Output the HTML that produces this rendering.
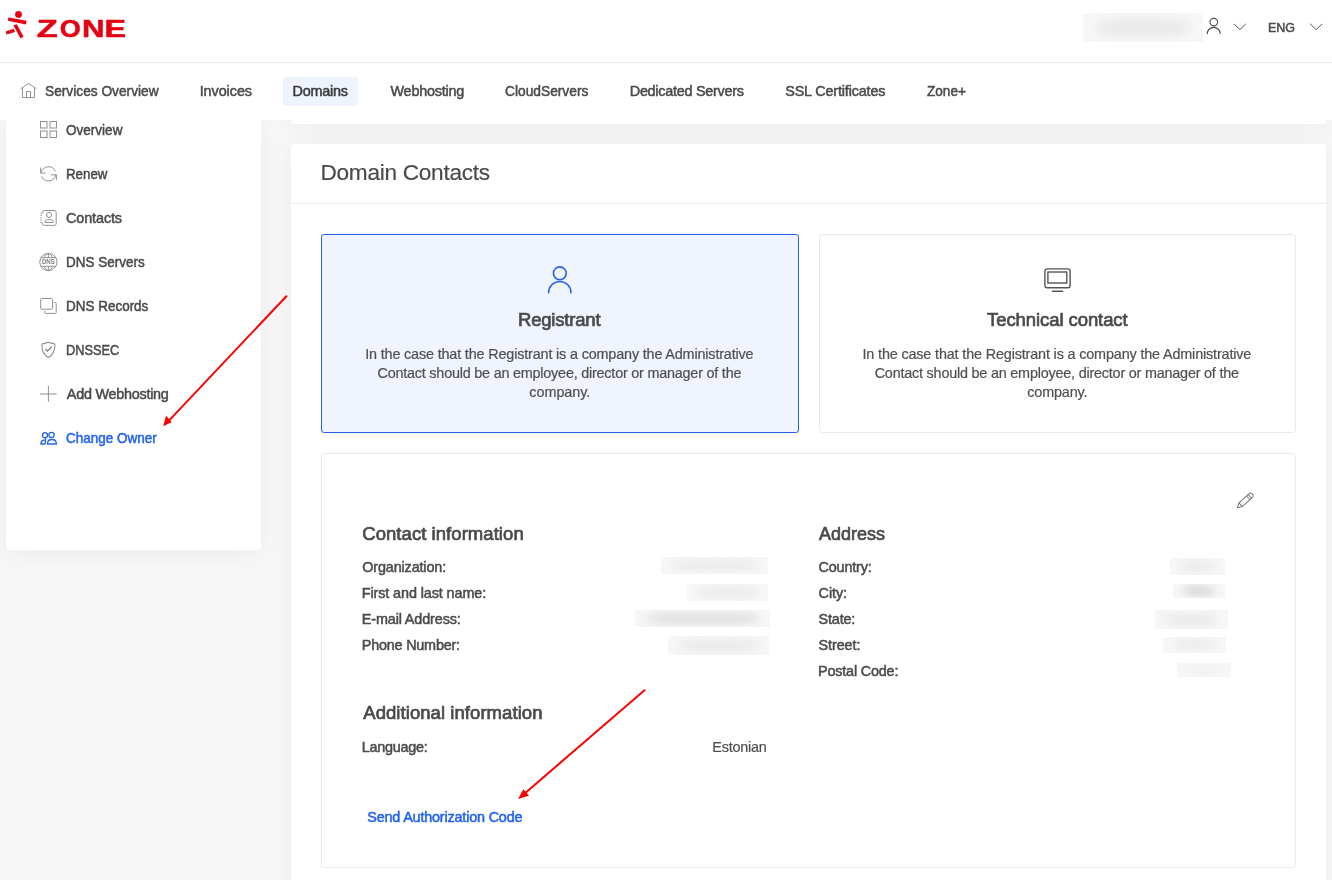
<!DOCTYPE html>
<html lang="en">
<head>
<meta charset="utf-8">
<title>Domain Contacts</title>
<style>
*{box-sizing:border-box;margin:0;padding:0}
html,body{width:1332px;height:880px;overflow:hidden}
body{position:relative;background:#f7f7f8;font-family:"Liberation Sans",sans-serif;color:#4a4a4a}
.abs{position:absolute}
.t{position:absolute;white-space:nowrap;line-height:1;transform-origin:0 0}
.m{-webkit-text-stroke:0.5px currentColor}
.h{-webkit-text-stroke:0.7px currentColor}
.r{-webkit-text-stroke:0.2px currentColor}
#txt{position:absolute;left:0;top:0;width:1332px;height:880px;will-change:transform}
#hdr{left:0;top:0;width:1332px;height:63px;background:#fff;border-bottom:1px solid #e8e9f1}
#nav{left:0;top:63px;width:1332px;height:57px;background:#fff}
#pill{left:283px;top:77px;width:75px;height:29px;border-radius:4px;background:#eef3fe}
#side{left:6px;top:120px;width:255px;height:430px;background:#fff;border-radius:0 0 4px 4px;box-shadow:0 3px 24px rgba(0,0,20,.05)}
#prev{left:291px;top:100px;width:1035px;height:24px;background:#fff;border-radius:0 0 4px 4px;box-shadow:0 3px 24px rgba(0,0,20,.05)}
#card{left:291px;top:144px;width:1035px;height:760px;background:#fff;border-radius:4px 4px 0 0;box-shadow:0 3px 24px rgba(0,0,20,.05)}
#cardline{left:291px;top:203px;width:1035px;height:1px;background:#ebecf1}
#reg{left:321px;top:234px;width:478px;height:199px;border:1px solid #2563eb;border-radius:3px;background:#eff4fe}
#tech{left:819px;top:234px;width:477px;height:199px;border:1px solid #e8e9f0;border-radius:4px;background:#fff}
#info{left:321px;top:453px;width:975px;height:415px;border:1px solid #e8e9f0;border-radius:4px;background:#fff}
.bl{position:absolute;overflow:hidden;background:#f7f7f7}
.bl i{position:absolute;inset:4px 10px;background:#e8e8e8;filter:blur(5px);border-radius:40%}
svg{position:absolute;overflow:visible}
</style>
</head>
<body>
<div id="side" class="abs"></div>
<div id="prev" class="abs"></div>
<div id="card" class="abs"></div>
<div id="hdr" class="abs"></div>
<div id="nav" class="abs"></div>
<div id="pill" class="abs"></div>
<div id="cardline" class="abs"></div>
<div id="reg" class="abs"></div>
<div id="tech" class="abs"></div>
<div id="info" class="abs"></div>

<!--TEXT-->
<div id="txt">
<span class="t m" style="left:44.77px;top:83.81px;font-size:14.4px;transform:scaleX(0.9538);color:#4a4a4a">Services Overview</span>
<span class="t m" style="left:199.65px;top:83.81px;font-size:14.4px;letter-spacing:-0.057px;color:#4a4a4a">Invoices</span>
<span class="t m" style="left:292.55px;top:83.81px;font-size:14.4px;letter-spacing:-0.217px;color:#3a3a3a">Domains</span>
<span class="t m" style="left:390.5px;top:83.81px;font-size:14.4px;letter-spacing:-0.217px;color:#4a4a4a">Webhosting</span>
<span class="t m" style="left:505.37px;top:83.81px;font-size:14.4px;transform:scaleX(0.9561);color:#4a4a4a">CloudServers</span>
<span class="t m" style="left:629.75px;top:83.81px;font-size:14.4px;letter-spacing:-0.263px;color:#4a4a4a">Dedicated Servers</span>
<span class="t m" style="left:785.25px;top:83.81px;font-size:14.4px;letter-spacing:-0.163px;color:#4a4a4a">SSL Certificates</span>
<span class="t m" style="left:926.81px;top:83.81px;font-size:14.4px;transform:scaleX(0.9432);color:#4a4a4a">Zone+</span>
<span class="t m" style="left:66.08px;top:122.81px;font-size:14.4px;transform:scaleX(0.9406);color:#4a4a4a">Overview</span>
<span class="t m" style="left:65.62px;top:166.81px;font-size:14.4px;transform:scaleX(0.925);color:#4a4a4a">Renew</span>
<span class="t m" style="left:66.05px;top:210.81px;font-size:14.4px;letter-spacing:-0.114px;color:#4a4a4a">Contacts</span>
<span class="t m" style="left:65.61px;top:254.81px;font-size:14.4px;transform:scaleX(0.9366);color:#4a4a4a">DNS Servers</span>
<span class="t m" style="left:65.61px;top:298.81px;font-size:14.4px;transform:scaleX(0.936);color:#4a4a4a">DNS Records</span>
<span class="t m" style="left:65.66px;top:342.81px;font-size:14.4px;transform:scaleX(0.8868);color:#4a4a4a">DNSSEC</span>
<span class="t m" style="left:66.8px;top:386.81px;font-size:14.4px;letter-spacing:-0.254px;color:#4a4a4a">Add Webhosting</span>
<span class="t m" style="left:66.08px;top:430.81px;font-size:14.4px;transform:scaleX(0.9371);color:#2262f0">Change Owner</span>
<span class="t m" style="left:1268.16px;top:20.57px;font-size:13.5px;transform:scaleX(0.9261);color:#4a4a4a">ENG</span>
<span class="t r" style="left:320.5px;top:161.87px;font-size:22.6px;letter-spacing:-0.268px;color:#4a4a4a">Domain Contacts</span>
<span class="t h" style="left:518.0px;top:311.34px;font-size:18.5px;letter-spacing:-0.194px;color:#4a4a4a">Registrant</span>
<span class="t h" style="left:987.05px;top:311.34px;font-size:18.5px;letter-spacing:-0.081px;color:#4a4a4a">Technical contact</span>
<span class="t r" style="left:365.2px;top:346.81px;font-size:14.4px;letter-spacing:-0.16px;color:#4f4f4f">In the case that the Registrant is a company the Administrative</span>
<span class="t r" style="left:377.5px;top:365.81px;font-size:14.4px;letter-spacing:-0.215px;color:#4f4f4f">Contact should be an employee, director or manager of the</span>
<span class="t r" style="left:529.35px;top:384.81px;font-size:14.4px;letter-spacing:-0.043px;color:#4f4f4f">company.</span>
<span class="t r" style="left:862.5px;top:346.81px;font-size:14.4px;letter-spacing:-0.153px;color:#4f4f4f">In the case that the Registrant is a company the Administrative</span>
<span class="t r" style="left:874.7px;top:365.81px;font-size:14.4px;letter-spacing:-0.208px;color:#4f4f4f">Contact should be an employee, director or manager of the</span>
<span class="t r" style="left:1027.25px;top:384.81px;font-size:14.4px;letter-spacing:-0.143px;color:#4f4f4f">company.</span>
<span class="t h" style="left:362.25px;top:525.34px;font-size:18.5px;letter-spacing:0.056px;color:#4a4a4a">Contact information</span>
<span class="t m" style="left:362.25px;top:559.81px;font-size:14.4px;letter-spacing:-0.142px;color:#4a4a4a">Organization:</span>
<span class="t m" style="left:361.75px;top:585.81px;font-size:14.4px;letter-spacing:-0.103px;color:#4a4a4a">First and last name:</span>
<span class="t m" style="left:361.75px;top:611.81px;font-size:14.4px;letter-spacing:-0.125px;color:#4a4a4a">E-mail Address:</span>
<span class="t m" style="left:361.75px;top:637.81px;font-size:14.4px;letter-spacing:-0.204px;color:#4a4a4a">Phone Number:</span>
<span class="t h" style="left:363.25px;top:704.34px;font-size:18.5px;letter-spacing:0.062px;color:#4a4a4a">Additional information</span>
<span class="t m" style="left:361.75px;top:739.81px;font-size:14.4px;letter-spacing:-0.25px;color:#4a4a4a">Language:</span>
<span class="t r" style="left:712.25px;top:739.81px;font-size:14.4px;letter-spacing:-0.207px;color:#4f4f4f">Estonian</span>
<span class="t m" style="left:367.25px;top:809.81px;font-size:14.4px;letter-spacing:-0.18px;color:#2262f0">Send Authorization Code</span>
<span class="t h" style="left:819.14px;top:525.34px;font-size:18.5px;transform:scaleX(0.9721);color:#4a4a4a">Address</span>
<span class="t m" style="left:818.55px;top:559.81px;font-size:14.4px;letter-spacing:-0.179px;color:#4a4a4a">Country:</span>
<span class="t m" style="left:818.55px;top:585.81px;font-size:14.4px;letter-spacing:-0.062px;color:#4a4a4a">City:</span>
<span class="t m" style="left:818.55px;top:611.81px;font-size:14.4px;letter-spacing:-0.16px;color:#4a4a4a">State:</span>
<span class="t m" style="left:818.55px;top:637.81px;font-size:14.4px;letter-spacing:-0.092px;color:#4a4a4a">Street:</span>
<span class="t m" style="left:818.05px;top:663.81px;font-size:14.4px;letter-spacing:-0.186px;color:#4a4a4a">Postal Code:</span>
</div>
<!--/TEXT-->
<!--ICONS-->
<svg width="1332" height="880" viewBox="0 0 1332 880" style="left:0;top:0;pointer-events:none">
<!-- logo runner -->
<g fill="#e60012">
<circle cx="18.5" cy="14.4" r="3.4"/>
<polygon points="8.4,17.4 26.6,20.7 26,24.4 7.9,20.7"/>
<polygon points="13.4,25.3 16.8,24.2 23.5,36.5 20.5,38.5"/>
<polygon points="5.9,31.3 13.9,28.8 14.9,32.1 6.4,34.6"/>
</g>
<text aria-label="ZONE" y="36.9" font-family="'Liberation Sans',sans-serif" font-weight="700" font-size="24.2" fill="#e60012" stroke="#e60012" stroke-width=".5"><tspan x="36.7" textLength="21" lengthAdjust="spacingAndGlyphs">Z</tspan><tspan x="59.7" textLength="21" lengthAdjust="spacingAndGlyphs">O</tspan><tspan x="82" textLength="22.5" lengthAdjust="spacingAndGlyphs">N</tspan><tspan x="104.5" textLength="21.5" lengthAdjust="spacingAndGlyphs">E</tspan></text>

<!-- header user + chevrons -->
<g fill="none" stroke="#4d4d4d" stroke-width="1.15">
<circle cx="1213.8" cy="22.1" r="3.8"/>
<path d="M1207.2 33.9 A6.55 6.55 0 0 1 1220.3 33.9"/>
</g>
<g fill="none" stroke="#555" stroke-width="1">
<path d="M1234 23.9 L1239.9 29.6 L1245.8 23.9"/>
<path d="M1310.2 23.9 L1316.2 29.6 L1322.1 23.9"/>
</g>

<!-- nav home -->
<g fill="none" stroke="#929292" stroke-width="1">
<path d="M20.8 88.7 L28.5 83.4 L36.2 88.7"/>
<path d="M22.5 88 V97.5 H34.5 V88"/>
<path d="M26.5 97.5 V91.5 H30.5 V97.5"/>
</g>

<!-- sidebar icons -->
<g fill="none" stroke="#909090" stroke-width="1">
<!-- overview grid -->
<rect x="40.5" y="121.5" width="6.5" height="6.5"/>
<rect x="50" y="121.5" width="6.5" height="6.5"/>
<rect x="40.5" y="131" width="6.5" height="6.5"/>
<rect x="50" y="131" width="6.5" height="6.5"/>
<!-- renew -->
<path d="M41.3 172.6 A7.4 7.4 0 0 1 55.4 171.4"/>
<path d="M40.6 167.6 V173.1 H45.7"/>
<path d="M55.6 175 A7.4 7.4 0 0 1 41.5 176.3"/>
<path d="M51.1 174.8 H56.4 V179.9"/>
<!-- contacts -->
<path d="M42.4 213 V212.5 A2 2 0 0 1 44.4 210.5 H54.2 A2 2 0 0 1 56.2 212.5 V223.4 A2 2 0 0 1 54.2 225.4 H44.4 A2 2 0 0 1 42.4 223.4 V222.8"/>
<path d="M40.3 213.4 H42.4 M40.3 215.6 H42 M40.3 218 H42 M40.3 220.3 H42 M40.3 222.5 H42.4" stroke-width=".8"/>
<circle cx="49" cy="215" r="2.5"/>
<path d="M45 222.4 C45 220.4 46.6 219.3 49.1 219.3 C51.7 219.3 53.3 220.4 53.3 222.4 Z"/>
<!-- dns servers globe -->
<circle cx="48.4" cy="262" r="8.6"/>
<path d="M40.6 257.7 H56.2 M40.6 266.3 H56.2"/>
<path d="M48.4 253.4 V257.7 M48.4 266.3 V270.6"/>
<path d="M44.2 257.7 C45 255.4 46.5 253.9 48.4 253.4 C50.3 253.9 51.8 255.4 52.6 257.7"/>
<path d="M44.2 266.3 C45 268.6 46.5 270.1 48.4 270.6 C50.3 270.1 51.8 268.6 52.6 266.3"/>
<!-- dns records -->
<rect x="40.7" y="298.5" width="11.8" height="10.7" rx="1"/>
<path d="M54.2 302.5 H55.4 A.8 .8 0 0 1 56.2 303.3 V312.6 A.8 .8 0 0 1 55.4 313.4 H45.4 A.8 .8 0 0 1 44.6 312.6 V311"/>
<!-- shield -->
<path d="M48.4 342.3 C46.5 343.1 44.6 343.5 42.9 343.6 Q41.9 343.7 41.9 344.7 C41.8 350.5 44 354.8 48.4 357.5 C52.8 354.8 55 350.5 54.9 344.7 Q54.9 343.7 53.9 343.6 C52.2 343.5 50.3 343.1 48.4 342.3 Z" stroke-width="1.1"/>
<path d="M45.3 348.8 L47.4 351.2 L51.7 346.8" stroke-width="1.25" stroke="#7c7c7c"/>
<!-- plus -->
<path d="M40 394 H56.6 M48.4 386 V401.8"/>
</g>
<text x="41.9" y="264.4" font-family="'Liberation Sans',sans-serif" font-weight="700" font-size="7" fill="#808080" textLength="13.1" lengthAdjust="spacingAndGlyphs">DNS</text>
<!-- change owner (blue) -->
<g fill="none" stroke="#2563eb" stroke-width="1.3">
<circle cx="45" cy="435.2" r="2.5"/>
<circle cx="51.5" cy="434.9" r="2.6"/>
<path d="M47.4 444 C47.4 441.2 49 439.5 51.9 439.5 C54.8 439.5 56.4 441.2 56.4 444 Z"/>
<path d="M45.6 438 L45.3 443.4 C45.2 443.9 45 444 44.5 444 H40.9 C40.9 441.6 42.3 440.2 44.6 440"/>
</g>

<!-- registrant person -->
<g fill="none" stroke="#2563eb" stroke-width="1.6" stroke-linecap="round">
<circle cx="559.8" cy="273.3" r="6.4"/>
<path d="M548.6 292.7 A11.2 11.2 0 0 1 571 292.7"/>
</g>
<!-- monitor -->
<g fill="none" stroke="#555" stroke-width="1.4" stroke-linecap="round">
<rect x="1044.9" y="268.9" width="25.2" height="18.8" rx="2.2"/>
<rect x="1047.9" y="272" width="18.9" height="11"/>
<path d="M1052.3 291.3 H1062.7"/>
</g>
<!-- pencil -->
<g transform="translate(1237.2 507.8) rotate(-42)" fill="none" stroke="#7c7474" stroke-width="1" stroke-linejoin="round">
<path d="M0 0 L4.6 -2.5 H18.6 A1.8 1.8 0 0 1 20.4 -.7 V.7 A1.8 1.8 0 0 1 18.6 2.5 H4.6 Z"/>
<path d="M4.6 -2.5 V2.5 M14.8 -2.5 V2.5 M17 -2.5 V2.5"/>
</g>

<!-- red arrows -->
<g stroke="#ff0000" stroke-width="2" fill="none" stroke-linecap="round">
<path d="M286.4 296.2 L168 421.6"/>
<path d="M644.5 690.2 L523 794.9"/>
</g>
<g fill="#ff0000">
<polygon points="163.2,426.3 166,415.8 171.9,421.9"/>
<polygon points="518,799 523.4,789.3 529,795.8"/>
</g>
</svg>

<!-- blurred redactions -->
<div class="bl" style="left:1083px;top:13px;width:120px;height:29px"><i style="inset:6px 14px"></i></div>
<div class="bl" style="left:661px;top:557px;width:107px;height:17px"><i></i></div>
<div class="bl" style="left:687px;top:584px;width:81px;height:17px"><i></i></div>
<div class="bl" style="left:635px;top:610px;width:135px;height:17px"><i style="background:#d9d9d9"></i></div>
<div class="bl" style="left:668px;top:636px;width:101px;height:19px"><i></i></div>
<div class="bl" style="left:1170px;top:558px;width:55px;height:17px"><i></i></div>
<div class="bl" style="left:1173px;top:584px;width:52px;height:14px"><i style="background:#c4c4c4"></i></div>
<div class="bl" style="left:1155px;top:610px;width:73px;height:19px"><i></i></div>
<div class="bl" style="left:1163px;top:637px;width:63px;height:16px"><i></i></div>
<div class="bl" style="left:1177px;top:663px;width:54px;height:14px"><i style="background:#ececec"></i></div>
<!--/ICONS-->
</body>
</html>
